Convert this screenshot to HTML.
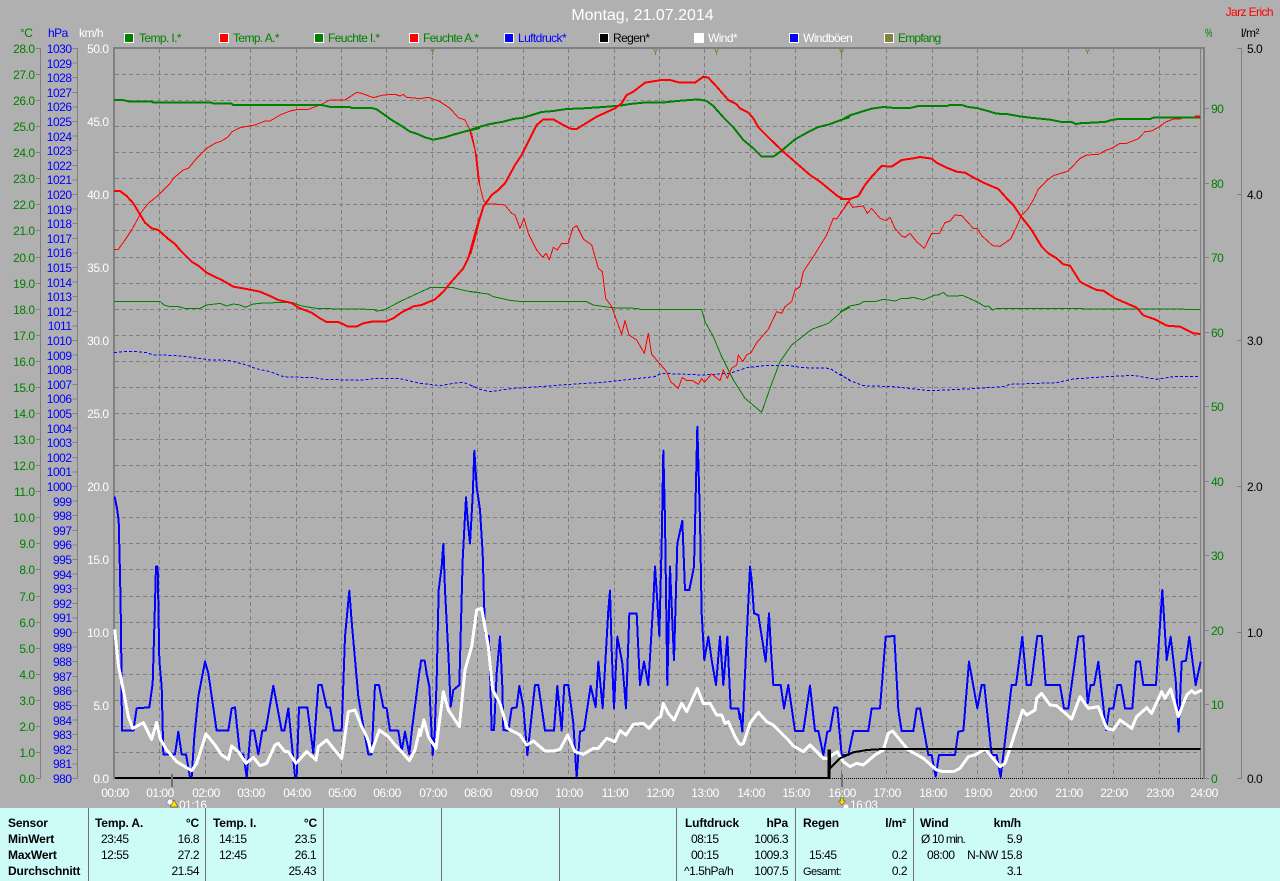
<!DOCTYPE html>
<html><head><meta charset="utf-8"><title>Montag, 21.07.2014</title>
<style>
html,body{margin:0;padding:0;background:#b0b0b0;width:1280px;height:881px;overflow:hidden}
svg{display:block;font-family:"Liberation Sans",sans-serif;font-size:12px;letter-spacing:-.5px}
.e{text-anchor:end}.m{text-anchor:middle}
.g{fill:#008000}.b{fill:#0000ff}.w{fill:#fff}.k{fill:#000}
.c polyline{fill:none;shape-rendering:crispEdges;stroke-linejoin:round}
.gr{fill:none;stroke:#808080;stroke-width:1;shape-rendering:crispEdges}
.s{font-weight:bold;letter-spacing:-.15px}
</style></head><body>
<svg width="1280" height="881" viewBox="0 0 1280 881" xmlns="http://www.w3.org/2000/svg">
<rect width="1280" height="881" fill="#b0b0b0"/>
<text x="642.500" y="20" class="m" style="font-size:16px;letter-spacing:0" fill="#ffffff">Montag, 21.07.2014</text>
<text x="1273" y="16" class="e" fill="#ff0000" style="letter-spacing:-.6px">Jarz Erich</text>

<!-- legend -->
<g stroke="#fff" stroke-width="1" shape-rendering="crispEdges">
<rect x="124.5" y="33.5" width="9" height="9" fill="#008000"/>
<rect x="219.5" y="33.5" width="9" height="9" fill="#ff0000"/>
<rect x="314.5" y="33.5" width="9" height="9" fill="#008000"/>
<rect x="409.5" y="33.5" width="9" height="9" fill="#ff0000"/>
<rect x="504.5" y="33.5" width="9" height="9" fill="#0000ff"/>
<rect x="599.5" y="33.5" width="9" height="9" fill="#000"/>
<rect x="694.5" y="33.5" width="9" height="9" fill="#fff"/>
<rect x="789.5" y="33.5" width="9" height="9" fill="#0000ff"/>
<rect x="884.5" y="33.5" width="9" height="9" fill="#808040"/>
</g>
<g style="letter-spacing:-.6px">
<text x="139" y="42" class="g">Temp. I.*</text>
<text x="233" y="42" class="g">Temp. A.*</text>
<text x="328" y="42" class="g">Feuchte I.*</text>
<text x="423" y="42" class="g">Feuchte A.*</text>
<text x="518" y="42" class="b">Luftdruck*</text>
<text x="613" y="42" class="k">Regen*</text>
<text x="708" y="42" class="w">Wind*</text>
<text x="803" y="42" class="w">Windböen</text>
<text x="898" y="42" class="g" style="letter-spacing:-.8px">Empfang</text>
</g>

<!-- axis headers -->
<text x="20" y="37" class="g">°C</text>
<text x="48" y="37" class="b">hPa</text>
<text x="79" y="37" class="w">km/h</text>
<text x="1205" y="37" class="g" textLength="7" lengthAdjust="spacingAndGlyphs">%</text>
<text x="1241" y="37" class="k">l/m²</text>

<!-- grid -->
<path class="gr" stroke-dasharray="4 3" d="M115 74.5H1201M115 100.5H1201M115 126.5H1201M115 152.5H1201M115 178.5H1201M115 204.5H1201M115 230.5H1201M115 257.5H1201M115 283.5H1201M115 309.5H1201M115 335.5H1201M115 361.5H1201M115 387.5H1201M115 413.5H1201M115 439.5H1201M115 465.5H1201M115 491.5H1201M115 517.5H1201M115 543.5H1201M115 569.5H1201M115 596.5H1201M115 622.5H1201M115 648.5H1201M115 674.5H1201M115 700.5H1201M115 726.5H1201M115 752.5H1201"/>
<path class="gr" stroke-dasharray="4 3" d="M159.5 49V778M205.5 49V778M250.5 49V778M296.5 49V778M341.5 49V778M386.5 49V778M432.5 49V778M477.5 49V778M523.5 49V778M568.5 49V778M614.5 49V778M659.5 49V778M704.5 49V778M750.5 49V778M795.5 49V778M841.5 49V778M886.5 49V778M932.5 49V778M977.5 49V778M1022.5 49V778M1068.5 49V778M1113.5 49V778M1159.5 49V778"/>
<path class="gr" d="M1200.5 49V778"/>
<path d="M113 47H1205V49H115V779H113ZM1203 49H1205V779H1203Z" fill="#808080" shape-rendering="crispEdges"/>

<!-- left axes -->
<path class="gr" d="M40.5 48V778M36 48.5h5M36 74.5h5M36 100.5h5M36 126.5h5M36 152.5h5M36 178.5h5M36 204.5h5M36 230.5h5M36 257.5h5M36 283.5h5M36 309.5h5M36 335.5h5M36 361.5h5M36 387.5h5M36 413.5h5M36 439.5h5M36 465.5h5M36 491.5h5M36 517.5h5M36 543.5h5M36 569.5h5M36 596.5h5M36 622.5h5M36 648.5h5M36 674.5h5M36 700.5h5M36 726.5h5M36 752.5h5M36 778.5h5"/>
<line x1="75" x2="75" y1="48" y2="779" stroke="#808080" stroke-width="5" stroke-dasharray="1 13.6" shape-rendering="crispEdges"/>
<path class="gr" d="M77.5 48V778"/>

<g class="g">
<g class="e" style="text-anchor:end">
<text x="34.5" y="53">28.0</text><text x="34.5" y="79">27.0</text><text x="34.5" y="105">26.0</text><text x="34.5" y="131">25.0</text><text x="34.5" y="157">24.0</text><text x="34.5" y="183">23.0</text><text x="34.5" y="209">22.0</text><text x="34.5" y="235">21.0</text><text x="34.5" y="262">20.0</text><text x="34.5" y="288">19.0</text><text x="34.5" y="314">18.0</text><text x="34.5" y="340">17.0</text><text x="34.5" y="366">16.0</text><text x="34.5" y="392">15.0</text><text x="34.5" y="418">14.0</text><text x="34.5" y="444">13.0</text><text x="34.5" y="470">12.0</text><text x="34.5" y="496">11.0</text><text x="34.5" y="522">10.0</text><text x="34.5" y="548">9.0</text><text x="34.5" y="574">8.0</text><text x="34.5" y="601">7.0</text><text x="34.5" y="627">6.0</text><text x="34.5" y="653">5.0</text><text x="34.5" y="679">4.0</text><text x="34.5" y="705">3.0</text><text x="34.5" y="731">2.0</text><text x="34.5" y="757">1.0</text><text x="34.5" y="783">0.0</text>
</g></g>
<g class="b" style="text-anchor:end">
<text x="71.5" y="53">1030</text><text x="71.5" y="68">1029</text><text x="71.5" y="82">1028</text><text x="71.5" y="97">1027</text><text x="71.5" y="111">1026</text><text x="71.5" y="126">1025</text><text x="71.5" y="141">1024</text><text x="71.5" y="155">1023</text><text x="71.5" y="170">1022</text><text x="71.5" y="184">1021</text><text x="71.5" y="199">1020</text><text x="71.5" y="214">1019</text><text x="71.5" y="228">1018</text><text x="71.5" y="243">1017</text><text x="71.5" y="257">1016</text><text x="71.5" y="272">1015</text><text x="71.5" y="287">1014</text><text x="71.5" y="301">1013</text><text x="71.5" y="316">1012</text><text x="71.5" y="330">1011</text><text x="71.5" y="345">1010</text><text x="71.5" y="360">1009</text><text x="71.5" y="374">1008</text><text x="71.5" y="389">1007</text><text x="71.5" y="403">1006</text><text x="71.5" y="418">1005</text><text x="71.5" y="433">1004</text><text x="71.5" y="447">1003</text><text x="71.5" y="462">1002</text><text x="71.5" y="476">1001</text><text x="71.5" y="491">1000</text><text x="71.5" y="506">999</text><text x="71.5" y="520">998</text><text x="71.5" y="535">997</text><text x="71.5" y="549">996</text><text x="71.5" y="564">995</text><text x="71.5" y="579">994</text><text x="71.5" y="593">993</text><text x="71.5" y="608">992</text><text x="71.5" y="622">991</text><text x="71.5" y="637">990</text><text x="71.5" y="652">989</text><text x="71.5" y="666">988</text><text x="71.5" y="681">987</text><text x="71.5" y="695">986</text><text x="71.5" y="710">985</text><text x="71.5" y="725">984</text><text x="71.5" y="739">983</text><text x="71.5" y="754">982</text><text x="71.5" y="768">981</text><text x="71.5" y="783">980</text>
</g>
<g class="w" style="text-anchor:end">
<text x="108.5" y="53">50.0</text><text x="108.5" y="126">45.0</text><text x="108.5" y="199">40.0</text><text x="108.5" y="272">35.0</text><text x="108.5" y="345">30.0</text><text x="108.5" y="418">25.0</text><text x="108.5" y="491">20.0</text><text x="108.5" y="564">15.0</text><text x="108.5" y="637">10.0</text><text x="108.5" y="710">5.0</text><text x="108.5" y="783">0.0</text>
</g>

<!-- right axes -->
<path class="gr" d="M1205 108.5h4M1205 183.5h4M1205 257.5h4M1205 332.5h4M1205 406.5h4M1205 481.5h4M1205 555.5h4M1205 630.5h4M1205 704.5h4M1205 778.5h4M1241.5 48V778M1237 48.5h5M1237 194.5h5M1237 340.5h5M1237 486.5h5M1237 632.5h5M1237 778.5h5"/>
<g class="g">
<text x="1211" y="113">90</text><text x="1211" y="188">80</text><text x="1211" y="262">70</text><text x="1211" y="337">60</text><text x="1211" y="411">50</text><text x="1211" y="486">40</text><text x="1211" y="560">30</text><text x="1211" y="635">20</text><text x="1211" y="709">10</text><text x="1211" y="783">0</text>
</g>
<g class="k">
<text x="1247" y="53">5.0</text><text x="1247" y="199">4.0</text><text x="1247" y="345">3.0</text><text x="1247" y="491">2.0</text><text x="1247" y="637">1.0</text><text x="1247" y="783">0.0</text>
</g>

<!-- olive reception marks -->
<path d="M430.5 49l2 3 2-3M432.5 52v3M653.5 49l2 3 2-3M655.5 52v3M714.5 49l2 3 2-3M716.5 52v3M839.5 49l2 4 2-4M841.5 53v4M1085.5 49l2 3 2-3M1087.5 52v2" fill="none" stroke="#808040" stroke-width="1"/>

<!-- curves -->
<g class="c">
<g fill="none" stroke="#0000ff" stroke-dasharray="9 6">
<polyline transform="translate(100,40) scale(.33333)" stroke-width="3" points="42,938 75,934 115,935 140,938 160,945 215,946 260,950 330,960 385,961 440,975 465,985 510,995 550,1010 640,1013 670,1018 780,1021 820,1016 900,1016 960,1030 1020,1037 1060,1030 1090,1027 1130,1043"/>
<polyline transform="translate(470,40) scale(.33333)" stroke-width="3" points="0,1035 30,1048 60,1055 130,1045 210,1040 300,1033 400,1027 460,1020 555,1010 575,1000 700,1005 780,1000 830,983 890,976 950,976 1000,983 1080,985 1110,1005 1140,1020"/>
<polyline transform="translate(840,40) scale(.33333)" stroke-width="3" points="0,1002 30,1022 70,1037 160,1040 270,1052 380,1047 490,1040 510,1033 650,1028 700,1017 800,1010 880,1006 950,1018 1000,1010 1075,1010"/>
</g>
<g stroke="#008000" stroke-width="3">
<polyline transform="translate(100,40) scale(.33333)" points="42,784 180,784 192,795 210,800 235,800 255,805 300,805 320,795 345,792 360,790 380,798 400,792 420,795 437,802 460,792 490,789 575,787 605,798 650,805 720,807 820,808 830,813 850,811 890,790 910,780 975,750 990,743 1060,743 1100,753 1140,758"/>
<polyline transform="translate(470,40) scale(.33333)" points="0,755 55,762 70,770 120,781 155,785 350,785 370,795 425,803 500,805 510,808 695,808 705,845 730,890 755,950 790,1020 825,1075 875,1117 900,1045 915,1005 930,965 965,915 1025,868 1075,850 1115,815 1140,802"/>
<polyline transform="translate(840,40) scale(.33333)" points="0,815 30,798 60,792 70,785 105,785 130,778 165,783 185,775 205,775 220,772 250,780 285,765 295,765 310,757 322,768 370,767 410,785 435,800 445,798 458,810 470,805 1082,808"/>
</g>
<g stroke="#ff0000" stroke-width="3">
<polyline transform="translate(100,40) scale(.33333)" points="42,628 55,628 75,600 95,570 125,515 145,490 170,470 185,455 210,430 220,415 250,390 265,385 290,355 320,325 345,310 365,303 385,290 395,276 420,263 465,255 495,243 510,243 540,225 570,213 595,208 625,208 660,195 690,180 735,180 750,170 770,157 785,160 820,173 850,165 885,163 900,168 910,163 920,172 960,176 985,172 1020,185 1050,205 1075,233 1095,240 1115,280 1130,350 1140,440"/>
<polyline transform="translate(470,40) scale(.33333)" points="0,275 15,330 25,420 40,480 50,492 90,493 105,495 125,520 135,525 150,565 162,535 175,580 200,630 218,652 228,640 238,660 250,622 262,630 275,610 295,610 308,565 320,557 340,597 365,615 385,685 397,695 407,775 425,800 455,883 465,842 477,885 500,900 523,940 535,880 545,943 590,995 602,1025 625,1045 637,1012 650,1022 668,1022 685,1033 695,1015 703,1027 725,1002 750,1022 760,990 772,1015 785,985 800,975 805,945 818,965 830,945 843,938 860,908 895,868 920,815 935,820 945,800 965,785 975,750 990,740 1000,695 1030,650 1070,585 1090,535 1100,537 1140,480"/>
<polyline transform="translate(840,40) scale(.33333)" points="0,520 10,508 25,483 38,502 70,498 82,520 95,505 120,535 138,542 150,532 165,565 185,588 195,592 210,580 230,605 253,625 275,580 298,580 315,548 330,543 345,525 365,527 400,565 412,565 425,587 458,617 480,619 512,597 530,560 545,525 560,512 580,480 595,447 620,422 640,407 685,393 720,355 740,345 775,343 800,330 815,325 840,310 860,310 895,296 915,275 935,273 955,262 975,247 1000,237 1025,237"/>
</g>
<g stroke="#008000" stroke-width="6">
<polyline transform="translate(100,40) scale(.33333)" points="42,180 68,180 90,185 155,185 160,188 335,188 340,191 395,191 400,195 665,195 692,201 750,201 755,204 815,204 830,208 850,222 875,240 905,258 930,275 950,281 975,292 1000,299 1035,292 1060,284 1100,273 1140,264"/>
<polyline transform="translate(470,40) scale(.33333)" points="0,270 20,263 60,252 100,245 130,237 160,233 215,216 250,213 290,207 340,205 400,201 450,197 480,192 520,188 575,188 620,183 685,178 710,183 730,198 760,232 790,262 820,300 850,325 875,350 910,350 935,332 975,298 1020,273 1045,261 1075,254 1110,241 1140,231"/>
<polyline transform="translate(840,40) scale(.33333)" points="0,242 30,226 65,215 95,206 130,201 165,204 210,204 235,198 320,198 330,195 365,195 385,201 410,204 440,212 470,221 500,222 545,230 580,234 630,239 665,246 695,246 708,252 725,249 760,248 800,245 815,240 835,237 930,237 940,233 1082,233"/>
</g>
<g stroke="#ff0000" stroke-width="6">
<polyline transform="translate(100,40) scale(.33333)" points="42,453 60,453 80,468 100,490 118,520 135,548 155,565 175,570 205,597 225,612 240,630 275,665 295,677 320,698 340,708 365,720 400,740 445,748 480,755 510,768 535,780 575,789 595,803 635,818 660,835 680,846 715,846 745,860 770,860 790,850 820,844 855,845 880,835 905,817 940,799 965,795 1005,778 1030,755 1050,730 1090,685 1105,655 1120,600 1140,530"/>
<polyline transform="translate(470,40) scale(.33333)" points="0,645 10,610 25,550 40,500 65,465 85,450 105,430 135,375 155,345 185,285 200,255 220,238 250,238 285,258 305,267 320,267 380,230 435,205 455,190 470,165 490,155 525,128 575,120 600,120 630,128 675,128 700,110 715,113 740,140 775,180 800,193 810,205 835,218 850,235 865,262 900,297 940,335 980,370 1020,405 1050,425 1105,470 1120,477 1140,477"/>
<polyline transform="translate(840,40) scale(.33333)" points="0,477 30,477 55,468 75,435 95,410 125,378 155,380 185,360 220,355 240,351 275,356 290,368 320,383 350,395 375,398 405,415 435,430 475,447 500,475 520,495 540,525 575,570 605,620 625,640 650,655 670,673 690,677 720,725 740,736 770,750 790,752 825,775 890,803 910,826 945,838 980,857 1020,860 1060,880 1082,882"/>
<polyline transform="translate(840,40) scale(.33333)" points="1065,230 1080,230"/>
</g>

<g stroke="#0000ff" stroke-width="6">
<polyline transform="translate(100,420) scale(.33333)" points="44,230 50,260 56,300 60,460 63,620 66,932 100,932 110,865 148,862 158,790 163,620 168,440 173,440 178,720 185,800 190,1003 225,1003 235,935 245,1003 258,1003 270,1072 275,1072 283,950 295,830 315,725 325,760 350,932 385,932 395,865 405,862 420,1003 430,1003 440,1072 452,932 462,932 475,1003 487,932 497,932 520,797 545,932 553,932 565,865 585,1070 590,1070 597,862 622,862 640,1000 655,795 665,795 680,862 690,862 702,932 725,932 735,650 748,512 755,605 775,830 790,920 805,1003 815,1003 825,795 837,795 850,862 860,865 870,932 895,932 905,995 915,935 928,1003 935,935 960,742"/>
<polyline transform="translate(420,420) scale(.33333)" points="0,750 3,722 14,722 20,760 28,800 33,905 38,1005 44,940 50,780 56,510 65,440 70,372 75,510 85,700 92,860 100,810 118,795 128,420 138,232 143,300 150,370 158,230 163,92 170,200 180,270 188,400 195,640 207,650 215,930 222,930 230,760 240,650 247,800 250,930 265,932 275,865 290,862 298,798 310,860 322,1005 345,795 355,795 375,932 402,932 412,798 425,932 433,795 445,795 460,910 470,1072 480,935 492,930 512,798 527,862 535,725 548,865 565,570 570,512 575,690 582,865 592,650 607,730 618,865 628,580 650,580 660,795 672,725 685,795 700,545 705,440 712,545 718,648 725,370 730,92 735,300 742,795 750,440 762,720 772,370 787,303 795,510 808,510 822,440 832,20 840,300 845,580 853,720 865,650 875,720 888,795 900,650 910,795 922,650 932,865 955,865 960,900"/>
<polyline transform="translate(740,540) scale(.33333)" points="0,520 7,575 17,360 30,80 35,120 42,220 55,225 77,365 87,220 93,330 100,435 122,435 132,505 145,435 165,573 190,573 210,437 225,573 235,573 250,645 262,575 270,573 282,503 292,503 305,645 325,645 340,573 385,573 395,505 420,505 437,290 463,288 475,510 485,573 520,573 530,505 540,505 565,645 575,645 587,710 597,645 645,645 655,575 670,572 687,365 712,505 725,435 733,435 755,645 770,645 782,712 815,435 828,435 847,290 860,435 873,435 892,288 905,288 917,435 960,435 972,505 985,505 1015,290 1030,288 1043,490 1052,435 1062,435 1075,365 1098,570 1108,505 1120,505 1132,435 1143,435 1155,505 1177,505 1188,365 1200,365 1210,435 1248,435 1267,150 1280,360 1292,290 1307,420 1316,575 1325,365 1338,362 1348,290 1367,435 1382,365"/>
</g>
<g stroke="#ffffff" stroke-width="9">
<polyline transform="translate(100,420) scale(.33333)" points="44,628 55,735 70,810 85,890 98,925 130,908 155,958 170,907 180,955 200,990 230,1025 275,1052 290,1030 318,942 345,975 365,1005 385,1018 395,978 415,995 438,1030 460,1012 480,1037 500,1030 525,975 535,970 555,995 565,995 588,1030 620,995 648,1020 655,980 680,960 700,985 725,1015 745,875 765,870 785,920 800,950 815,995 838,930 865,950 885,975 905,995 928,1022 945,990 960,925"/>
<polyline transform="translate(420,420) scale(.33333)" points="0,950 12,900 25,950 48,985 70,815 85,870 118,920 135,750 155,680 170,570 185,565 205,680 218,810 240,850 262,925 300,945 320,975 340,963 375,993 400,993 420,988 443,945 465,995 490,1003 520,985 535,985 560,955 585,965 600,932 618,945 640,913 670,910 687,925 712,895 722,890 730,850 745,880 762,900 785,850 800,875 832,805 850,850 870,850 890,885 905,885 915,910 925,905 945,950 960,975"/>
<polyline transform="translate(740,540) scale(.33333)" points="0,615 10,610 30,550 55,517 80,545 100,555 145,600 160,618 190,635 210,615 250,655 262,655 292,635 310,665 330,680 350,670 370,675 405,645 430,630 445,580 458,573 480,600 505,630 550,655 590,690 610,695 640,695 660,685 685,650 705,645 735,627 780,680 795,670 815,610 848,510 860,525 885,510 890,475 905,460 930,495 950,497 995,537 1020,470 1045,505 1075,500 1100,565 1120,570 1140,540 1175,565 1190,530 1220,503 1235,520 1265,455 1275,475 1292,447 1315,530 1340,465 1355,452 1365,460 1385,450"/>
</g>
<g stroke="#000" stroke-width="6">
<polyline transform="translate(740,540) scale(.33333)" points="270,685 300,655 340,637 380,630 430,627 1382,627"/>
<polyline transform="translate(740,540) scale(.33333)" stroke-width="10" points="262,712 267,712 268,628"/>
</g>
</g>
<rect x="115" y="777" width="715" height="2" fill="#000" shape-rendering="crispEdges"/>
<line x1="830" x2="1204" y1="778.5" y2="778.5" stroke="#000" stroke-width="1" stroke-dasharray="1 1" shape-rendering="crispEdges"/>

<!-- hour labels -->
<g class="w" style="text-anchor:middle">
<text x="115" y="797">00:00</text><text x="160" y="797">01:00</text><text x="206" y="797">02:00</text><text x="251" y="797">03:00</text><text x="297" y="797">04:00</text><text x="342" y="797">05:00</text><text x="387" y="797">06:00</text><text x="433" y="797">07:00</text><text x="478" y="797">08:00</text><text x="524" y="797">09:00</text><text x="569" y="797">10:00</text><text x="615" y="797">11:00</text><text x="660" y="797">12:00</text><text x="705" y="797">13:00</text><text x="751" y="797">14:00</text><text x="796" y="797">15:00</text><text x="842" y="797">16:00</text><text x="887" y="797">17:00</text><text x="933" y="797">18:00</text><text x="978" y="797">19:00</text><text x="1023" y="797">20:00</text><text x="1069" y="797">21:00</text><text x="1114" y="797">22:00</text><text x="1160" y="797">23:00</text><text x="1204" y="797">24:00</text>
</g>
<!-- sun markers -->
<rect x="171" y="774" width="2" height="13" fill="#707070"/>
<rect x="841" y="774" width="2" height="13" fill="#707070"/>
<circle cx="170" cy="802" r="3" fill="#fff" stroke="#6060d0" stroke-width="1" stroke-dasharray="1 1"/>
<path d="M174 800l-4 7h8z" fill="#ffe000" stroke="#303000" stroke-width=".5"/>
<text x="179" y="809" class="w">01:16</text>
<path d="M840.5 798h3v3h2l-3.5 4-3.500-4h2z" fill="#ffe000" stroke="#404000" stroke-width=".5"/>
<circle cx="846" cy="807" r="2.500" fill="#fff"/>
<text x="850" y="809" class="w">16:03</text>

<!-- bottom panel -->
<rect x="0" y="808" width="1280" height="73" fill="#ccfbf8"/>
<path d="M88.500 808V881M205.500 808V881M323.500 808V881M441.500 808V881M559.500 808V881M676.500 808V881M795.500 808V881M913.500 808V881" stroke="#707070" stroke-width="1" shape-rendering="crispEdges"/>
<g class="k">
<g class="s">
<text x="8" y="827">Sensor</text><text x="8" y="843">MinWert</text><text x="8" y="859">MaxWert</text><text x="8" y="875">Durchschnitt</text>
<text x="95" y="827">Temp. A.</text><text x="199" y="827" class="e">°C</text>
<text x="213" y="827">Temp. I.</text><text x="317" y="827" class="e">°C</text>
<text x="685" y="827">Luftdruck</text><text x="788" y="827" class="e">hPa</text>
<text x="803" y="827">Regen</text><text x="906" y="827" class="e">l/m²</text>
<text x="920" y="827">Wind</text><text x="1021" y="827" class="e">km/h</text>
</g>
<text x="101" y="843">23:45</text><text x="199" y="843" class="e">16.8</text>
<text x="101" y="859">12:55</text><text x="199" y="859" class="e">27.2</text>
<text x="199" y="875" class="e">21.54</text>
<text x="219" y="843">14:15</text><text x="316" y="843" class="e">23.5</text>
<text x="219" y="859">12:45</text><text x="316" y="859" class="e">26.1</text>
<text x="316" y="875" class="e">25.43</text>
<text x="691" y="843">08:15</text><text x="788" y="843" class="e">1006.3</text>
<text x="691" y="859">00:15</text><text x="788" y="859" class="e">1009.3</text>
<text x="684" y="875">^1.5hPa/h</text><text x="788" y="875" class="e">1007.5</text>
<text x="809" y="859">15:45</text><text x="907" y="859" class="e">0.2</text>
<text x="803" y="875" style="font-size:11px">Gesamt:</text><text x="907" y="875" class="e">0.2</text>
<text x="921" y="843" style="letter-spacing:-.9px">Ø 10 min.</text><text x="1022" y="843" class="e">5.9</text>
<text x="927" y="859">08:00</text><text x="1022" y="859" class="e">N-NW 15.8</text>
<text x="1022" y="875" class="e">3.1</text>
</g>
</svg>
</body></html>
